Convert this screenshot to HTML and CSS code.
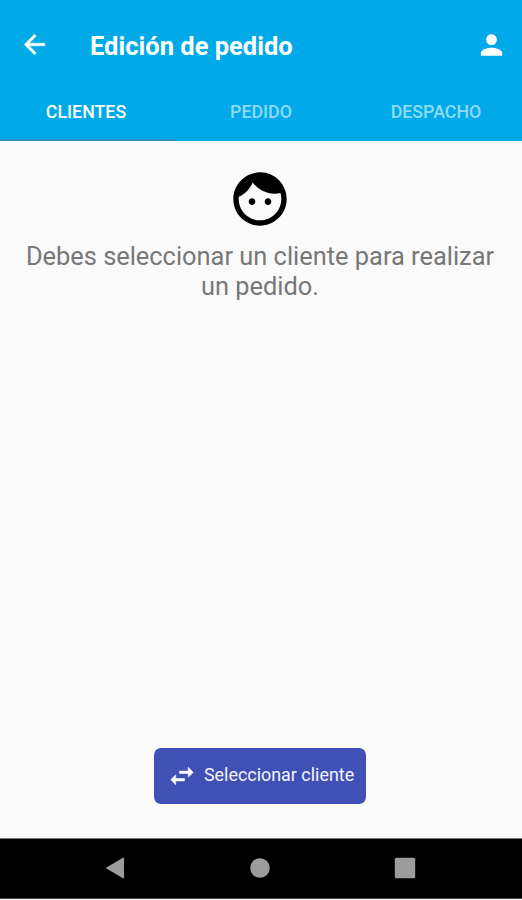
FILE: index.html
```
<!DOCTYPE html>
<html lang="es">
<head>
  <meta charset="UTF-8" />
  <title>Edición de pedido</title>
  <link rel="stylesheet" href="styles.css">
</head>
<body>
  <header class="header">
    <div class="toolbar">
      <svg class="icon-back" viewBox="0 0 24 24"><path d="M20 11H7.83l5.59-5.59L12 4l-8 8 8 8 1.41-1.41L7.83 13H20v-2z"/></svg>
      <h1>Edición de pedido</h1>
      <svg class="icon-user" viewBox="0 0 24 24"><path d="M12 12c2.21 0 4-1.79 4-4s-1.79-4-4-4-4 1.79-4 4 1.79 4 4 4zm0 2c-2.67 0-8 1.34-8 4v2h16v-2c0-2.66-5.33-4-8-4z"/></svg>
    </div>
    <nav class="tabs">
      <a class="tab active">CLIENTES</a>
      <a class="tab">PEDIDO</a>
      <a class="tab">DESPACHO</a>
    </nav>
  </header>
  <main class="content">
    <svg class="icon-face" viewBox="0 0 24 24"><path d="M9 11.75c-.69 0-1.25.56-1.25 1.25s.56 1.25 1.25 1.25 1.25-.56 1.25-1.25-.56-1.25-1.25-1.25zm6 0c-.69 0-1.25.56-1.25 1.25s.56 1.25 1.25 1.25 1.25-.56 1.25-1.25-.56-1.25-1.25-1.25zM12 2C6.48 2 2 6.48 2 12s4.48 10 10 10 10-4.48 10-10S17.52 2 12 2zm0 18c-4.41 0-8-3.59-8-8 0-.29.02-.58.05-.86 2.36-1.05 4.23-2.98 5.21-5.37C11.07 8.33 14.05 10 17.42 10c.78 0 1.53-.09 2.25-.26.21.71.33 1.47.33 2.26 0 4.41-3.59 8-8 8z"/></svg>
    <p class="message">Debes seleccionar un cliente para realizar un pedido.</p>
    <button class="select-button">
      <svg class="icon-swap" viewBox="0 0 24 24"><path d="M6.99 11L3 15l3.99 4v-3H14v-2H6.99v-3zM21 9l-3.99-4v3H10v2h7.01v3L21 9z"/></svg>
      <span>Seleccionar cliente</span>
    </button>
  </main>
  <footer class="navbar">
    <svg viewBox="0 0 24 24"><path d="M2.5 12L20 1.7q1-.5 1 .6v19.4q0 1.1-1 .6z"/></svg>
    <svg viewBox="0 0 24 24"><circle cx="12" cy="12" r="9.8"/></svg>
    <svg viewBox="0 0 24 24"><rect x="1.8" y="1.8" width="20.4" height="20.4" rx="1.5"/></svg>
  </footer>
</body>
</html>
```
FILE: styles.css
```
body {
  font-family: Roboto, Arial, sans-serif;
  background: #fafafa;
  margin: 0;
  height: 900px;
  display: flex;
  flex-direction: column;
  overflow: hidden;
}
svg {
  display: block;
  flex: none;
}
.header {
  background: #00aae8;
  color: #fff;
  height: 141px;
}
.toolbar {
  height: 89px;
  display: flex;
  align-items: center;
  padding: 0 14px 0 19px;
  box-sizing: border-box;
}
.icon-back {
  width: 31px;
  height: 31px;
  fill: #fff;
  stroke: #fff;
  stroke-width: 0.4;
}
.toolbar h1 {
  flex: 1;
  margin: 2px 0 0 40px;
  font-size: 25.5px;
  font-weight: 700;
}
.icon-user {
  width: 33px;
  height: 32px;
  fill: #fff;
}
.tabs {
  display: flex;
  height: 52px;
}
.tab {
  flex: 1;
  text-align: center;
  font-size: 17.8px;
  font-weight: 500;
  line-height: 45px;
  color: #8fdaf7;
  box-sizing: border-box;
  padding-right: 3px;
}
.tab:last-child {
  padding-right: 0;
}
.tab.active {
  color: #fff;
  border-bottom: 2px solid #2391c0;
}
.content {
  flex: 1;
  display: flex;
  flex-direction: column;
  align-items: center;
  padding: 26px 2px 0 0;
}
.icon-face {
  width: 64px;
  height: 64px;
}
.message {
  margin: 10px 20px 0;
  font-size: 25.4px;
  line-height: 30px;
  text-align: center;
  color: #777;
}
.select-button {
  display: flex;
  align-items: center;
  width: 212px;
  height: 56px;
  margin: auto 0 34px;
  padding: 0 0 0 13px;
  border: 0;
  border-radius: 7px;
  background: #4050b5;
  color: #f3f4ff;
  font-family: inherit;
  font-size: 17.9px;
  white-space: nowrap;
}
.icon-swap {
  width: 30px;
  height: 30px;
  fill: #fff;
  stroke: #fff;
  stroke-width: 0.4;
}
.select-button span {
  margin: 0 0 4px 7px;
}
.navbar {
  height: 59px;
  margin-bottom: 1px;
  padding-right: 2px;
  background: #000;
  border-top: 1px solid #777;
  border-bottom: 1px solid #444;
  display: flex;
  align-items: center;
  justify-content: center;
  gap: 121px;
}
.navbar svg {
  width: 24px;
  height: 24px;
  margin-bottom: 1px;
  fill: #9c9c9c;
}
```
